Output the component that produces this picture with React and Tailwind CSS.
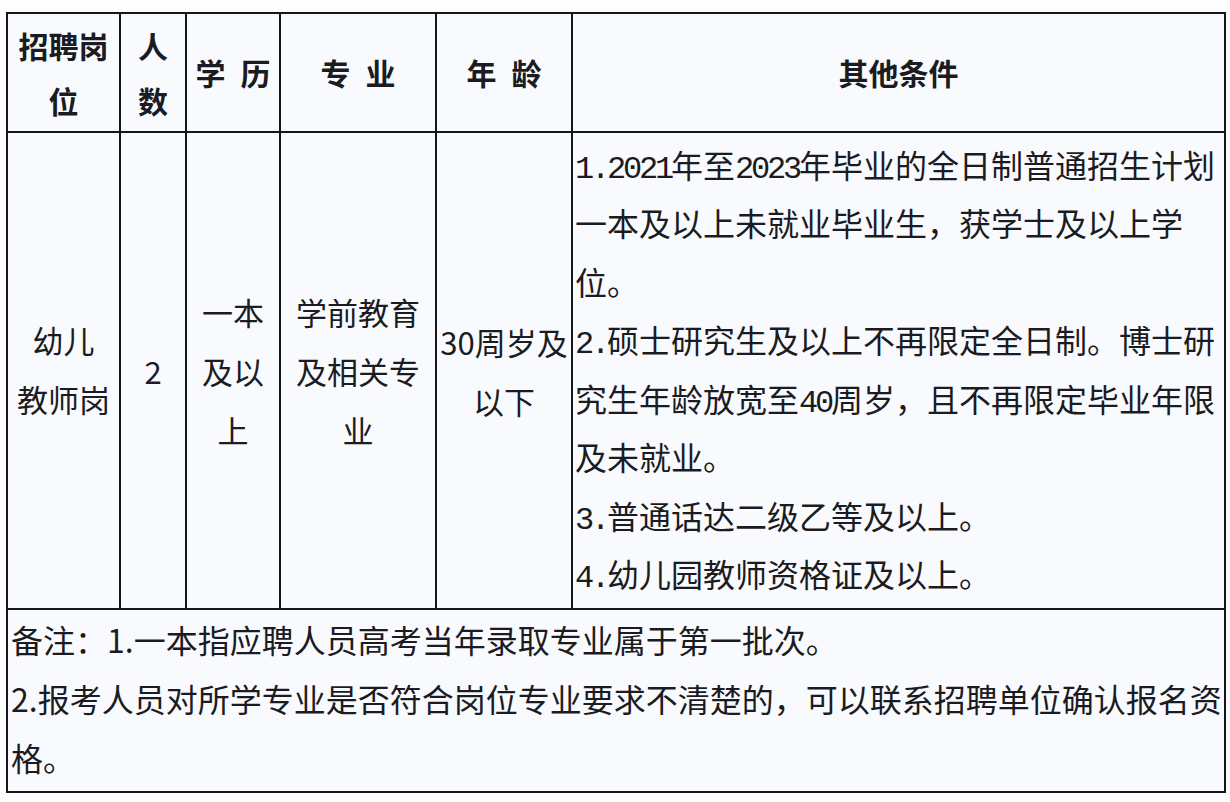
import React from 'react';

const cjk = "font-['Noto_Sans_CJK_SC','Noto_Sans',sans-serif]";

// SimSun-like half-width digits for the conditions column
const Num = ({ children }) => (
  <span className="font-['Liberation_Mono',monospace] tracking-[-0.1em] leading-none">{children}</span>
);

const cell = 'border-2 border-[#15151c] align-middle text-center p-0';

const conditions = [
  <><Num>1.2021</Num>年至<Num>2023</Num>年毕业的全日制普通招生计划</>,
  <>一本及以上未就业毕业生，获学士及以上学</>,
  <>位。</>,
  <><Num>2.</Num>硕士研究生及以上不再限定全日制。博士研</>,
  <>究生年龄放宽至<Num>40</Num>周岁，且不再限定毕业年限</>,
  <>及未就业。</>,
  <><Num>3.</Num>普通话达二级乙等及以上。</>,
  <><Num>4.</Num>幼儿园教师资格证及以上。</>,
];

const App = () => {
  return (
    <div className={`min-h-screen bg-[#fdfdfe] pl-[6px] pt-[12px] ${cjk} text-[#1b1b22]`}>
      <table className="w-[1218px] table-fixed border-collapse bg-[#f9fafd]">
        <colgroup>
          <col className="w-[113px]" />
          <col className="w-[66px]" />
          <col className="w-[94px]" />
          <col className="w-[156px]" />
          <col className="w-[136px]" />
          <col className="w-[653px]" />
        </colgroup>
        <thead>
          <tr className="h-[119px] text-[30px] font-bold leading-[55px]">
            <th className={cell}>招聘岗<br />位</th>
            <th className={cell}>人<br />数</th>
            <th className={cell}>学{'\u2002'}历</th>
            <th className={cell}>专{'\u2002'}业</th>
            <th className={cell}>年{'\u2002'}龄</th>
            <th className={cell}>其他条件</th>
          </tr>
        </thead>
        <tbody>
          <tr className="h-[477px] text-[31px] leading-[59px]">
            <td className={`${cell} pb-[4px]`}>幼儿<br />教师岗</td>
            <td className={cell}>2</td>
            <td className={cell}>一本<br />及以<br />上</td>
            <td className={cell}>学前教育<br />及相关专<br />业</td>
            <td className={`${cell} whitespace-nowrap`}>30周岁及<br />以下</td>
            <td className={`${cell} text-left pl-[2px] pb-[4px] text-[32px] whitespace-nowrap`}>
              {conditions.map((line, i) => (
                <div key={i} className="h-[58.5px] leading-[58.5px] overflow-hidden">{line}</div>
              ))}
            </td>
          </tr>
          <tr className="h-[183px]">
            <td colSpan={6} className={`${cell} text-left pl-[3px] pb-[4px] text-[32px] whitespace-nowrap`}>
              <div className="h-[59px] leading-[59px]">备注：1.一本指应聘人员高考当年录取专业属于第一批次。</div>
              <div className="h-[59px] leading-[59px]">2.报考人员对所学专业是否符合岗位专业要求不清楚的，可以联系招聘单位确认报名资</div>
              <div className="h-[59px] leading-[59px]">格。</div>
            </td>
          </tr>
        </tbody>
      </table>
    </div>
  );
};

export default App;
